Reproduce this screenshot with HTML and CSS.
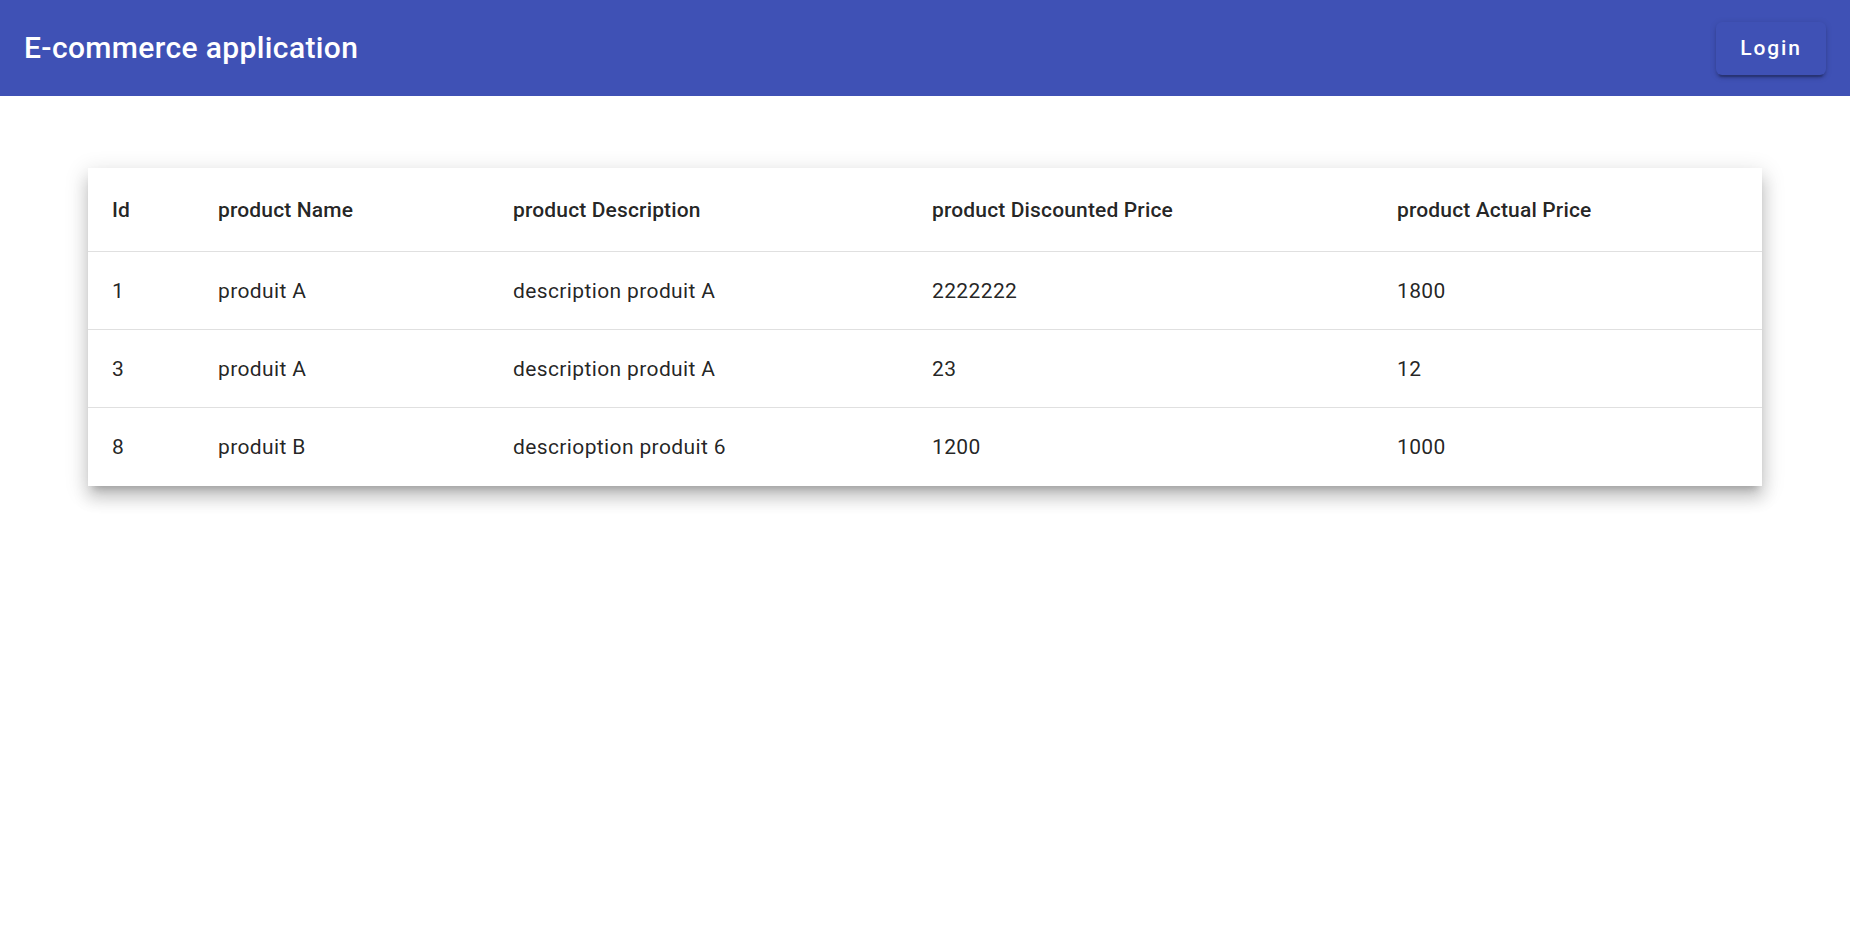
FILE: index.html
```html
<!DOCTYPE html>
<html lang="en">
<head>
<meta charset="utf-8">
<title>E-commerce application</title>
<link rel="stylesheet" href="styles.css">
</head>
<body>
<header class="toolbar">
  <span class="title">E-commerce application</span>
  <button class="login-btn">Login</button>
</header>
<main class="content">
  <div class="table-card">
    <table class="products">
      <colgroup>
        <col class="c-id">
        <col class="c-name">
        <col class="c-desc">
        <col class="c-disc">
        <col class="c-actual">
      </colgroup>
      <thead>
        <tr>
          <th>Id</th>
          <th>product Name</th>
          <th>product Description</th>
          <th>product Discounted Price</th>
          <th>product Actual Price</th>
        </tr>
      </thead>
      <tbody>
        <tr>
          <td>1</td>
          <td>produit A</td>
          <td>description produit A</td>
          <td>2222222</td>
          <td>1800</td>
        </tr>
        <tr>
          <td>3</td>
          <td>produit A</td>
          <td>description produit A</td>
          <td>23</td>
          <td>12</td>
        </tr>
        <tr>
          <td>8</td>
          <td>produit B</td>
          <td>descrioption produit 6</td>
          <td>1200</td>
          <td>1000</td>
        </tr>
      </tbody>
    </table>
  </div>
</main>
</body>
</html>
```

FILE: styles.css
```css
html, body {
  margin: 0;
  padding: 0;
  background: #ffffff;
  font-family: Roboto, "Helvetica Neue", Arial, sans-serif;
}

body {
  min-height: 100vh;
}

.toolbar {
  height: 96px;
  background: #3f51b5;
  color: #ffffff;
  display: flex;
  align-items: center;
  justify-content: space-between;
  padding: 0 24px;
  box-sizing: border-box;
}

.title {
  font-size: 30px;
  font-weight: 500;
  letter-spacing: 0.375px;
  margin-top: -2px;
}

.login-btn {
  font-family: Roboto, "Helvetica Neue", Arial, sans-serif;
  width: 110px;
  height: 53px;
  border: none;
  border-radius: 6px;
  background: #3f51b5;
  color: #ffffff;
  font-size: 21px;
  font-weight: 500;
  letter-spacing: 1.875px;
  padding: 0 0 2px;
  margin-top: 1px;
  box-shadow: 0 4.5px 1.5px -3px rgba(0,0,0,.2), 0 3px 3px 0 rgba(0,0,0,.14), 0 1.5px 7.5px 0 rgba(0,0,0,.12);
  cursor: pointer;
}

.content {
  padding: 72px 88px 60px;
}

.table-card {
  background: #ffffff;
  box-shadow: 0 7.5px 7.5px -4.5px rgba(0,0,0,.2), 0 12px 15px 1.5px rgba(0,0,0,.14), 0 4.5px 21px 3px rgba(0,0,0,.12);
}

.products {
  width: 100%;
  border-collapse: collapse;
  table-layout: fixed;
  color: rgba(0,0,0,.87);
  font-size: 21px;
}

.c-id { width: 130px; }
.c-name { width: 295px; }
.c-desc { width: 419px; }
.c-disc { width: 465px; }
.c-actual { width: auto; }

.products th,
.products td {
  text-align: left;
  padding: 0;
  border-bottom: 1px solid rgba(0,0,0,.12);
}

.products th {
  height: 83px;
  font-weight: 500;
  letter-spacing: 0.15px;
}

.products td {
  height: 77px;
  font-weight: 400;
  letter-spacing: 0.375px;
}

.products tbody tr:last-child td {
  border-bottom: none;
  height: 78px;
}

.products th:first-child,
.products td:first-child {
  padding-left: 24px;
}

.products th:last-child,
.products td:last-child {
  padding-right: 24px;
}
```
